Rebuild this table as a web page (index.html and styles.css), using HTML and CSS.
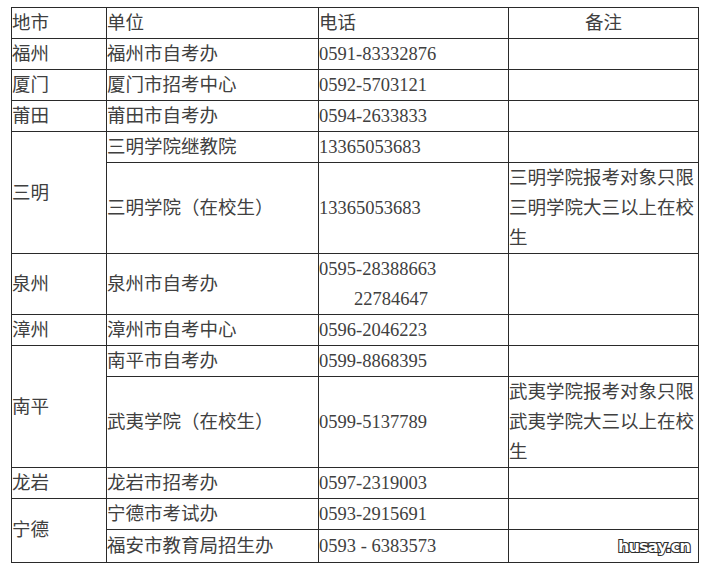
FILE: index.html
```html
<!DOCTYPE html>
<html lang="zh-CN">
<head>
<meta charset="utf-8">
<title>福建自考办联系方式</title>
<link rel="stylesheet" href="styles.css">
</head>
<body>
<table class="contacts">
  <colgroup>
    <col class="c-city">
    <col class="c-unit">
    <col class="c-phone">
    <col class="c-note">
  </colgroup>
  <tr>
    <td>地市</td><td>单位</td><td>电话</td><td class="center">备注</td>
  </tr>
  <tr>
    <td>福州</td><td>福州市自考办</td><td>0591-83332876</td><td></td>
  </tr>
  <tr>
    <td>厦门</td><td>厦门市招考中心</td><td>0592-5703121</td><td></td>
  </tr>
  <tr>
    <td>莆田</td><td>莆田市自考办</td><td>0594-2633833</td><td></td>
  </tr>
  <tr>
    <td rowspan="2">三明</td><td>三明学院继教院</td><td>13365053683</td><td></td>
  </tr>
  <tr>
    <td>三明学院（在校生）</td><td>13365053683</td><td>三明学院报考对象只限三明学院大三以上在校生</td>
  </tr>
  <tr>
    <td>泉州</td><td>泉州市自考办</td><td><span class="line">0595-28388663</span><span class="line indent">22784647</span></td><td></td>
  </tr>
  <tr>
    <td>漳州</td><td>漳州市自考中心</td><td>0596-2046223</td><td></td>
  </tr>
  <tr>
    <td rowspan="2">南平</td><td>南平市自考办</td><td>0599-8868395</td><td></td>
  </tr>
  <tr>
    <td>武夷学院（在校生）</td><td>0599-5137789</td><td>武夷学院报考对象只限武夷学院大三以上在校生</td>
  </tr>
  <tr>
    <td>龙岩</td><td>龙岩市招考办</td><td>0597-2319003</td><td></td>
  </tr>
  <tr>
    <td rowspan="2">宁德</td><td>宁德市考试办</td><td>0593-2915691</td><td></td>
  </tr>
  <tr>
    <td>福安市教育局招生办</td><td>0593 - 6383573</td><td class="mark-cell"><span class="watermark">husay.cn</span></td>
  </tr>
</table>
</body>
</html>
```

FILE: styles.css
```css
html, body {
  margin: 0;
  padding: 0;
  background: #ffffff;
}

body {
  padding: 7px 0 0 11px;
  font-family: "Liberation Serif", "Noto Sans CJK SC", serif;
  color: #404040;
}

.contacts {
  border-collapse: collapse;
  table-layout: fixed;
  width: 688px;
}

.c-city { width: 95px; }
.c-unit { width: 212px; }
.c-phone { width: 190px; }
.c-note { width: 190px; }

.contacts td {
  border: 1px solid #2a2a2a;
  padding: 0;
  font-size: 18.5px;
  line-height: 30px;
  vertical-align: middle;
  text-align: left;
  overflow: hidden;
}

.contacts td.center {
  text-align: center;
}

.line {
  display: block;
}

.indent {
  padding-left: 35px;
}

.contacts td.mark-cell {
  text-align: right;
}

.watermark {
  display: inline-block;
  margin-right: 8px;
  font-family: "DejaVu Sans", sans-serif;
  font-weight: bold;
  font-size: 16px;
  letter-spacing: -0.8px;
  color: #ffffff;
  -webkit-text-stroke: 2.2px #2e2e2e;
  paint-order: stroke fill;
  vertical-align: middle;
}
```
